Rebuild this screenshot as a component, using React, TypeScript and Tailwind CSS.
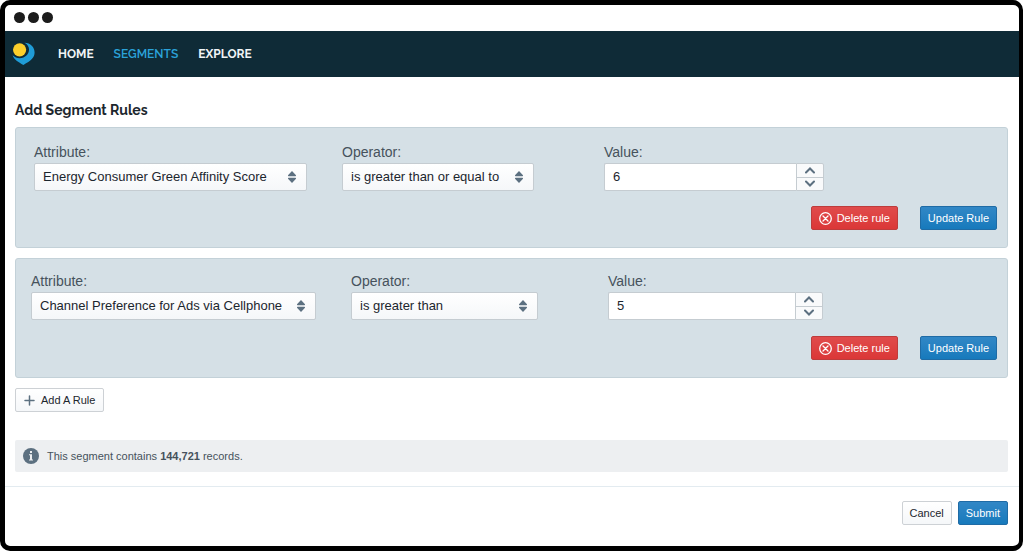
import React from 'react';

type Rule = {
  id: number;
  attribute: string;
  operator: string;
  value: string;
  rowClass: string;
  attributeClass: string;
  operatorClass: string;
  valueClass: string;
};

const rules: Rule[] = [
  {
    id: 1,
    attribute: 'Energy Consumer Green Affinity Score',
    operator: 'is greater than or equal to',
    value: '6',
    rowClass: 'pt-[14px] pl-[18px]',
    attributeClass: 'w-[273px]',
    operatorClass: 'w-[192px]',
    valueClass: 'w-[220px]',
  },
  {
    id: 2,
    attribute: 'Channel Preference for Ads via Cellphone',
    operator: 'is greater than',
    value: '5',
    rowClass: 'pt-3 pb-px pl-[15px]',
    attributeClass: 'w-[285px]',
    operatorClass: 'w-[187px]',
    valueClass: 'w-[215px]',
  },
];

const navItems = ['HOME', 'SEGMENTS', 'EXPLORE'];

const buttonBase = 'flex h-6 items-center rounded-[2px] border text-[11px] leading-none';
const lightButton = 'border-[#cdd1d5] bg-linear-to-b from-white to-[#f5f7f9] text-[#1c262e]';
const blueButton = 'border-[#1f6ba5] bg-linear-to-b from-[#3187c6] to-[#167abc] px-[7px] text-white';
const redButton = 'border-[#bd3c3c] bg-linear-to-b from-[#e04b4b] to-[#db3737] px-[7px] text-white';

const Logo: React.FC = () => (
  <svg width="24" height="24" viewBox="0 0 24 24" aria-hidden="true">
    <path
      d="M12.5 0.800C18.5 0.800 22.600 5.200 22.600 10.600C22.600 15.800 19 18.800 11.400 22.900C6.300 20.400 2 17.400 0.600 13.300C2.800 15.400 5 16.200 7.600 16.200C13.300 16.200 17 12.300 17 7.600C17 4.800 15.500 2.300 12.500 0.800Z"
      fill="#1f9cd7"
    />
    <circle cx="7.600" cy="7.800" r="6.600" fill="#fccf2b" />
  </svg>
);

const SelectField: React.FC<{ id: string; label: string; value: string; className: string }> = ({
  id,
  label,
  value,
  className,
}) => (
  <div className={className}>
    <label htmlFor={id} className="block text-[14px] leading-5 text-[#46525c]">
      {label}
    </label>
    <div className="relative mt-px">
      <select
        id={id}
        defaultValue={value}
        className="block h-7 w-full appearance-none rounded-[2px] border border-[#c5ccd1] bg-linear-to-b from-white to-[#f5f7f9] pl-2 pr-6 text-[13px] text-[#1c262e]"
      >
        <option>{value}</option>
      </select>
      <svg
        className="pointer-events-none absolute top-2 right-[10px]"
        width="10"
        height="12"
        viewBox="0 0 10 12"
        fill="#5c7080"
        aria-hidden="true"
      >
        <path d="M5 0 L9 4.200 Q9.200 5.200 8.300 5.200 H1.700 Q0.800 5.200 1 4.200Z" />
        <path d="M5 12 L9 7.800 Q9.200 6.800 8.300 6.800 H1.700 Q0.800 6.800 1 7.800Z" />
      </svg>
    </div>
  </div>
);

const NumberField: React.FC<{ id: string; value: string; className: string }> = ({ id, value, className }) => (
  <div className={className}>
    <label htmlFor={id} className="block text-[14px] leading-5 text-[#46525c]">
      Value:
    </label>
    <div className="mt-px flex h-7">
      <input
        id={id}
        type="text"
        inputMode="numeric"
        defaultValue={value}
        className="min-w-0 flex-1 rounded-l-[2px] border border-r-0 border-[#c5ccd1] bg-white px-2 text-[13px] text-[#1c262e]"
      />
      <div className="flex w-7 flex-col rounded-r-[2px] border border-[#c5ccd1] bg-[#f9fafb]">
        <button type="button" aria-label="Increase" className="flex flex-1 items-center justify-center border-b border-[#c5ccd1]">
          <svg width="10" height="7" viewBox="0 0 10 7" fill="none" stroke="#5c7080" strokeWidth="2" strokeLinecap="round">
            <path d="M1 5.500 L5 1.500 L9 5.500" />
          </svg>
        </button>
        <button type="button" aria-label="Decrease" className="flex flex-1 items-center justify-center">
          <svg width="10" height="7" viewBox="0 0 10 7" fill="none" stroke="#5c7080" strokeWidth="2" strokeLinecap="round">
            <path d="M1 1.500 L5 5.500 L9 1.500" />
          </svg>
        </button>
      </div>
    </div>
  </div>
);

const RuleCard: React.FC<{ rule: Rule }> = ({ rule }) => (
  <section className="rounded-[3px] border border-[#c3d1d8] bg-[#d5e0e6] pb-[17px]">
    <div className={`flex flex-wrap ${rule.rowClass}`}>
      <SelectField
        id={`attribute-${rule.id}`}
        label="Attribute:"
        value={rule.attribute}
        className={`mr-[35px] ${rule.attributeClass}`}
      />
      <SelectField
        id={`operator-${rule.id}`}
        label="Operator:"
        value={rule.operator}
        className={`mr-[70px] ${rule.operatorClass}`}
      />
      <NumberField id={`value-${rule.id}`} value={rule.value} className={rule.valueClass} />
    </div>
    <div className="mt-[15px] flex justify-end gap-[22px] pr-[10px]">
      <button type="button" className={`${buttonBase} ${redButton}`}>
        <svg className="mr-[5px]" width="13" height="13" viewBox="0 0 13 13" fill="none" stroke="white" strokeWidth="1.300" strokeLinecap="round" aria-hidden="true">
          <circle cx="6.500" cy="6.500" r="5.800" />
          <path d="M4 4 L9 9 M9 4 L4 9" />
        </svg>
        Delete rule
      </button>
      <button type="button" className={`${buttonBase} ${blueButton}`}>
        Update Rule
      </button>
    </div>
  </section>
);

const App: React.FC = () => {
  return (
    <div className="flex min-h-screen bg-white pr-px pb-px font-['Liberation_Sans',Arial,sans-serif]">
      <div className="flex min-w-0 flex-1 flex-col overflow-hidden rounded-[10px] border-[5px] border-r-4 border-black bg-white">
        <div className="flex h-[26px] items-center gap-[3px] px-[9px] pb-0.5">
          <span className="size-[11px] rounded-full bg-[#1c1c1c]" />
          <span className="size-[11px] rounded-full bg-[#1c1c1c]" />
          <span className="size-[11px] rounded-full bg-[#1c1c1c]" />
        </div>

        <header className="flex h-[46px] items-center bg-[#0f2b37] px-[7px]">
          <Logo />
          <nav className="ml-[22px] flex items-center gap-5 font-['Raleway','Lato',sans-serif] text-[12px]">
            {navItems.map((item) => (
              <a
                key={item}
                href="#"
                className={item === 'SEGMENTS' ? 'font-semibold text-[#2ba3da]' : 'font-bold text-[#f0f4f6]'}
              >
                {item}
              </a>
            ))}
          </nav>
        </header>

        <main className="pt-[22px] pr-[11px] pl-[10px]">
          <h1 className="mb-[6px] font-['Raleway','Lato',sans-serif] text-[14px] leading-[22px] font-bold text-[#1d272e]">
            Add Segment Rules
          </h1>

          <div className="flex flex-col gap-[10px]">
            {rules.map((rule) => (
              <RuleCard key={rule.id} rule={rule} />
            ))}
          </div>

          <button type="button" className={`mt-[10px] px-2 ${buttonBase} ${lightButton}`}>
            <svg className="mr-[6px]" width="11" height="11" viewBox="0 0 11 11" stroke="#5c7080" strokeWidth="1.500" strokeLinecap="round" aria-hidden="true">
              <path d="M5.500 1 V10 M1 5.500 H10" />
            </svg>
            Add A Rule
          </button>

          <div className="mt-7 flex h-8 items-center rounded-[2px] bg-[#edeff1] px-2 text-[11px] text-[#46525c]">
            <svg className="mr-2" width="16" height="16" viewBox="0 0 16 16" aria-hidden="true">
              <circle cx="8" cy="8" r="8" fill="#5c7080" />
              <path d="M7 3 H9 V5 H7Z M6 6.300 H9 V11.500 H10 V12.500 H6 V11.500 H7 V7.300 H6Z" fill="#edeff1" />
            </svg>
            <p>
              This segment contains <strong>144,721</strong> records.
            </p>
          </div>
        </main>

        <footer className="mt-[14px] flex justify-end gap-[6px] border-t border-[#e3ebf0] pt-[14px] pr-[11px] pl-[10px]">
          <button type="button" className={`px-[7px] ${buttonBase} ${lightButton}`}>
            Cancel
          </button>
          <button type="submit" className={`${buttonBase} ${blueButton}`}>
            Submit
          </button>
        </footer>
      </div>
    </div>
  );
};

export default App;
